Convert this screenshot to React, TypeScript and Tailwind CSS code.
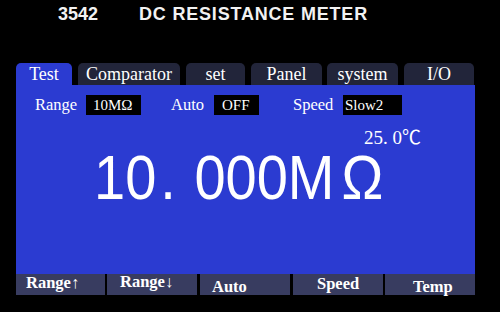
import React from "react";

const serif = { fontFamily: '"Liberation Serif", "Noto Sans CJK SC", serif' };

const tabs = [
  { label: "Test", w: "w-[56px]", ml: "ml-[16px]", active: true },
  { label: "Comparator", w: "w-[102px]", ml: "ml-[6px]", active: false },
  { label: "set", w: "w-[59px]", ml: "ml-[6px]", active: false },
  { label: "Panel", w: "w-[71px]", ml: "ml-[6px]", active: false },
  { label: "system", w: "w-[71px]", ml: "ml-[5px]", active: false },
  { label: "I/O", w: "w-[70px]", ml: "ml-[6px]", active: false },
];

export default function App() {
  return (
    <div className="w-[500px] h-[312px] bg-black overflow-hidden flex flex-col">
      {/* Title */}
      <div
        className="flex pt-[4px] leading-[20px] text-[18px] font-bold text-[#f2f2f2]"
        style={{ fontFamily: '"Liberation Sans", Arial, sans-serif' }}
      >
        <span className="ml-[58px]">3542</span>
        <span className="ml-[41px] tracking-[0.8px]">DC RESISTANCE METER</span>
      </div>

      {/* Tabs */}
      <div className="flex mt-[39px] h-[22px]" style={serif}>
        {tabs.map((t) => (
          <div
            key={t.label}
            className={`${t.w} ${t.ml} h-[22px] rounded-t-[5px] flex justify-center text-[18px] leading-[22px] text-white ${
              t.active ? "bg-[#2b3bd1]" : "bg-[#22253a]"
            }`}
          >
            {t.label}
          </div>
        ))}
      </div>

      {/* Blue panel */}
      <div className="ml-[16px] w-[459px] h-[189px] bg-[#2b3bd1] flex flex-col text-white" style={serif}>
        <div className="flex items-center pt-[10px] pl-[19px] text-[16.5px] leading-[20px]">
          <span className="w-[51px]">Range</span>
          <span className="w-[55px] h-[20px] bg-black pl-[7px] text-[15px] leading-[20px]">10MΩ</span>
          <span className="ml-[30px] w-[43px]">Auto</span>
          <span className="w-[45px] h-[20px] bg-black pl-[8px] text-[15px] leading-[20px]">OFF</span>
          <span className="ml-[34px] w-[50px]">Speed</span>
          <span className="w-[59px] h-[20px] bg-black pl-[2px] text-[15px] leading-[20px]">Slow2</span>
        </div>
        <div className="mt-[13px] pl-[348px] text-[19px] leading-[20px]">25. 0℃</div>
        <div
          className="mt-[2px] pl-[78px] text-[56px] leading-[56px] h-[56px] scale-y-[1.12] whitespace-pre"
          style={{ fontFamily: '"Liberation Sans", Arial, sans-serif' }}
        >
          10<span className="ml-[4px]">.</span>
          <span className="ml-[3px]"> 000M</span>
          <span className="ml-[7px]">Ω</span>
        </div>
      </div>

      {/* Soft keys */}
      <div className="ml-[16px] w-[459px] h-[21px] flex text-white font-bold text-[16.5px] leading-[16px]" style={serif}>
        <div className="w-[89px] bg-[#383c60] pl-[10px] pt-[1px]">Range↑</div>
        <div className="ml-[2px] w-[90px] bg-[#383c60] pl-[13px]">Range↓</div>
        <div className="ml-[3px] w-[90px] bg-[#383c60] pl-[12px] pt-[5px]">Auto</div>
        <div className="ml-[3px] w-[90px] bg-[#383c60] pl-[24px] pt-[2px]">Speed</div>
        <div className="ml-[2px] w-[90px] bg-[#383c60] pl-[28px] pt-[5px]">Temp</div>
      </div>
    </div>
  );
}
